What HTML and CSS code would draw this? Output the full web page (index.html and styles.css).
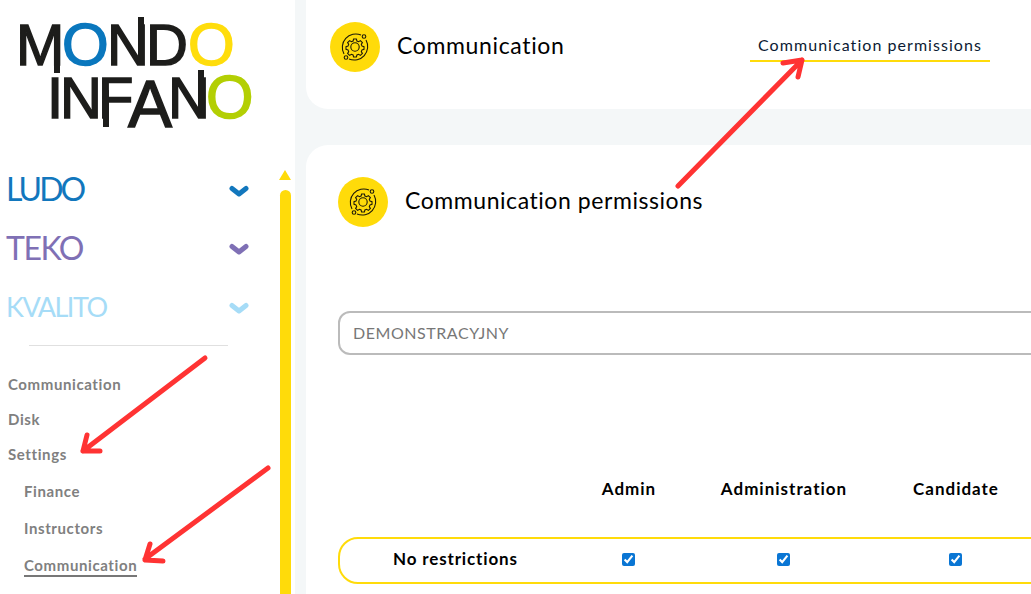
FILE: index.html
```html
<!DOCTYPE html>
<html lang="en">
<head>
  <meta charset="UTF-8">
  <meta name="viewport" content="width=device-width, initial-scale=1.0">
  <title>Communication permissions</title>
  <link rel="stylesheet" href="styles.css">
</head>
<body>
  <aside class="sidebar">
    <svg class="logo" width="295" height="160" viewBox="0 0 295 160">
      <g class="logo-text">
        <text x="16 62 107 146 188" y="65">M<tspan class="logo-blue">O</tspan>ND<tspan class="logo-yellow">O</tspan></text>
        <text x="47 60 98 128 168 206" y="118">INF<tspan class="logo-a" dy="9">A</tspan><tspan dy="-9">N</tspan><tspan class="logo-green">O</tspan></text>
      </g>
      <g class="logo-stems">
        <rect x="54" y="30" width="6" height="43"/>
        <rect x="138" y="17" width="6" height="40"/>
        <rect x="103" y="90" width="6" height="37"/>
        <rect x="198" y="70" width="6" height="40"/>
      </g>
    </svg>
    <div class="side-row">
      <nav class="nav">
        <div class="product ludo">
          <span class="wordmark">LUDO</span>
          <svg class="chevron" width="20" height="12" viewBox="0 0 20 12"><path d="M3 3.500L10 9L17 3.500"/></svg>
        </div>
        <div class="product teko">
          <span class="wordmark">TEKO</span>
          <svg class="chevron" width="20" height="12" viewBox="0 0 20 12"><path d="M3 3.500L10 9L17 3.500"/></svg>
        </div>
        <div class="product kvalito">
          <span class="wordmark">KVALITO</span>
          <svg class="chevron" width="20" height="12" viewBox="0 0 20 12"><path d="M3 3.500L10 9L17 3.500"/></svg>
        </div>
        <hr class="divider">
        <ul class="menu">
          <li>Communication</li>
          <li>Disk</li>
          <li>Settings</li>
        </ul>
        <ul class="submenu">
          <li>Finance</li>
          <li>Instructors</li>
          <li><span class="current">Communication</span></li>
        </ul>
      </nav>
      <div class="scrollbar">
        <div class="scroll-arrow"></div>
        <div class="scroll-thumb"></div>
      </div>
    </div>
  </aside>

  <main class="content">
    <section class="card top-card">
      <div class="top-left">
        <span class="badge">
          <svg width="34" height="34" viewBox="0 0 34 34"><use href="#gear"/></svg>
        </span>
        <h1 class="top-title">Communication</h1>
      </div>
      <a class="tab">Communication permissions</a>
    </section>

    <section class="card body-card">
      <div class="body-head">
        <span class="badge">
          <svg width="34" height="34" viewBox="0 0 34 34"><use href="#gear"/></svg>
        </span>
        <h2 class="body-title">Communication permissions</h2>
      </div>
      <div class="select-box">DEMONSTRACYJNY</div>
      <div class="perm-grid perm-head">
        <span></span>
        <span>Admin</span>
        <span>Administration</span>
        <span>Candidate</span>
      </div>
      <div class="perm-grid perm-row">
        <span class="perm-label">No restrictions</span>
        <span><input type="checkbox" checked></span>
        <span><input type="checkbox" checked></span>
        <span><input type="checkbox" checked></span>
      </div>
    </section>
  </main>

  <!-- gear icon used twice -->
  <svg class="defs" width="0" height="0">
    <symbol id="gear" viewBox="0 0 34 34">
      <g fill="none" stroke="#1d1a0a" stroke-width="1.100">
        <circle cx="17" cy="17" r="4.200"/>
        <path d="M15.600 9h2.800l.5 2 1.700.7 1.800-1.100 2 2-1.100 1.800.7 1.700 2 .5v2.800l-2 .5-.7 1.700 1.100 1.800-2 2-1.800-1.100-1.700.7-.5 2h-2.800l-.5-2-1.700-.7-1.800 1.100-2-2 1.100-1.800-.7-1.700-2-.5v-2.800l2-.5.7-1.700-1.100-1.800 2-2 1.800 1.100 1.700-.7z"/>
        <path d="M6 24A13.500 13.500 0 0 1 23 5"/>
        <path d="M28 10A13.500 13.500 0 0 1 11 29"/>
        <circle cx="26" cy="6.500" r="1.800"/>
        <circle cx="8" cy="27.500" r="1.800"/>
      </g>
    </symbol>
  </svg>

  <!-- red annotation arrows drawn over the screenshot -->
  <svg class="arrows" width="1031" height="594" viewBox="0 0 1031 594">
    <path d="M678 186L802 60M783 63L802 60L798 77"/>
    <path d="M205 358L83 451M87 435L83 451L100 451"/>
    <path d="M268 468L145 559M150 544L145 560L163 561"/>
  </svg>
</body>
</html>
```

FILE: styles.css
```css
* {
  box-sizing: border-box;
}
html, body {
  height: 100%;
}
body {
  margin: 0;
  display: flex;
  overflow: hidden;
  background: #f4f7f8;
  font-family: Lato, 'Noto Sans', sans-serif;
  color: #000;
}

.sidebar {
  flex: 0 0 295px;
  height: 594px;
  background: #fff;
}
.logo {
  display: block;
}
.logo-text text {
  font-family: 'Liberation Sans', sans-serif;
  font-size: 58px;
  fill: #1d1d1b;
  stroke: #1d1d1b;
  stroke-width: 1.500;
}
.logo-text .logo-a {
  font-size: 66px;
}
.logo-text .logo-blue {
  font-size: 60px;
  fill: #0a77bd;
  stroke: #0a77bd;
}
.logo-text .logo-yellow {
  font-size: 60px;
  fill: #ffdd0c;
  stroke: #ffdd0c;
}
.logo-text .logo-green {
  font-size: 61px;
  fill: #b3cf04;
  stroke: #b3cf04;
}
.logo-stems {
  fill: #1d1d1b;
}

.side-row {
  display: flex;
  height: 434px;
}
.nav {
  width: 279px;
}
.product {
  display: flex;
  align-items: center;
  justify-content: space-between;
  height: 58.500px;
  padding: 0 30px 0 6px;
}
.wordmark {
  font-size: 32px;
  line-height: 1;
  letter-spacing: -2.500px;
}
.chevron {
  margin-top: 3px;
  fill: none;
  stroke: currentColor;
  stroke-width: 5;
  stroke-linecap: round;
  stroke-linejoin: round;
}
.ludo {
  color: #1277bd;
}
.ludo .wordmark {
  letter-spacing: -3px;
}
.teko {
  color: #7f70b5;
}
.teko .wordmark {
  letter-spacing: -1.500px;
}
.kvalito {
  color: #a6dcf7;
}
.kvalito .wordmark {
  font-size: 27px;
  letter-spacing: -1.500px;
}

.divider {
  width: 199px;
  margin: 9px 0 0 29px;
  border: 0;
  border-top: 1px solid #e0e0e0;
}
.menu, .submenu {
  list-style: none;
  margin: 0;
  padding: 0;
  font-size: 15px;
  font-weight: 700;
  letter-spacing: .6px;
  color: #808080;
}
.menu {
  padding: 21px 0 0 8px;
}
.menu li {
  height: 35px;
  line-height: 35px;
}
.submenu {
  padding: 1px 0 0 24px;
}
.submenu li {
  height: 37px;
  line-height: 37px;
}
.current {
  display: inline-block;
  line-height: 19px;
  border-bottom: 2px solid #777;
}

.scrollbar {
  width: 13px;
  padding-top: 10px;
}
.scroll-arrow {
  width: 0;
  height: 0;
  border-left: 6.500px solid transparent;
  border-right: 6.500px solid transparent;
  border-bottom: 10px solid #ffdb0a;
}
.scroll-thumb {
  width: 11px;
  height: 420px;
  margin: 10px 0 0 1px;
  border-radius: 6px 6px 0 0;
  background: #ffdb0a;
}

.content {
  flex: 1;
  min-width: 0;
  padding-left: 11px;
  overflow: hidden;
}
.card {
  width: 760px;
  background: #fff;
}
.badge {
  flex: none;
  display: flex;
  align-items: center;
  justify-content: center;
  width: 50px;
  height: 50px;
  border-radius: 50%;
  background: #ffdb0a;
}
.top-card {
  display: flex;
  height: 109px;
  padding: 22px 0 0 24px;
  border-radius: 0 0 0 22px;
}
.top-left {
  display: flex;
  align-items: center;
  width: 420px;
  height: 50px;
}
.top-title {
  margin: 0 0 5px 17px;
  font-size: 23px;
  font-weight: 400;
  letter-spacing: .65px;
}
.tab {
  width: 240px;
  height: 40px;
  border-bottom: 2px solid #ffdb0a;
  text-align: center;
  font-size: 16px;
  line-height: 46px;
  letter-spacing: 1.050px;
  color: #0b1a33;
}
.body-card {
  height: 449px;
  margin-top: 36px;
  padding: 32px 0 0 32px;
  border-radius: 22px 0 0 0;
}
.body-head {
  display: flex;
  align-items: center;
}
.body-title {
  margin: 0 0 5px 17px;
  font-size: 23px;
  font-weight: 400;
  letter-spacing: .56px;
}
.select-box {
  width: 740px;
  height: 44px;
  margin-top: 84px;
  padding-left: 13px;
  border: 2px solid #bbb;
  border-radius: 12px;
  font-size: 16px;
  line-height: 40px;
  letter-spacing: .55px;
  color: #777;
}
.perm-grid {
  display: grid;
  grid-template-columns: 230px 122px 188px 156px;
  align-items: center;
  text-align: center;
  font-size: 17px;
  font-weight: 700;
  letter-spacing: 1px;
}
.perm-head {
  margin-top: 123px;
  height: 20px;
}
.perm-row {
  grid-template-columns: 227px 122px 188px 156px;
  width: 740px;
  height: 47px;
  margin-top: 39px;
  border: 2px solid #ffdb0a;
  border-radius: 20px;
}
.perm-row input {
  display: block;
  margin: 0 auto 3px;
  accent-color: #0a76d4;
}
.perm-label {
  padding: 0 0 4px 53px;
  text-align: left;
  letter-spacing: .85px;
}

.defs {
  position: absolute;
}
.arrows {
  position: absolute;
  top: 0;
  left: 0;
  pointer-events: none;
  fill: none;
  stroke: #ff3333;
  stroke-width: 5;
  stroke-linecap: round;
  stroke-linejoin: round;
}
```
